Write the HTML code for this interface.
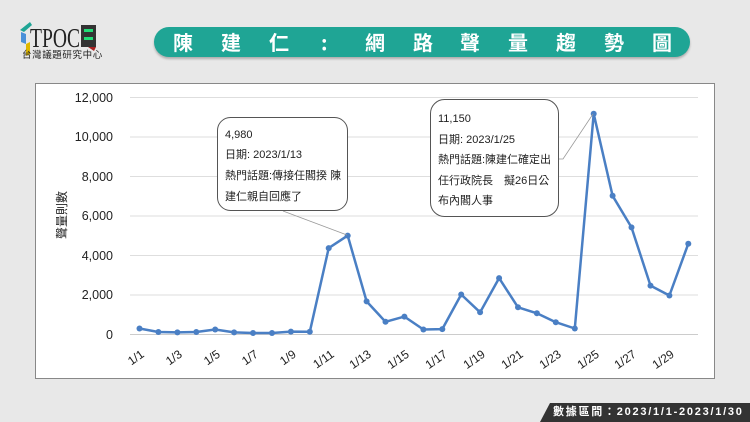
<!DOCTYPE html>
<html><head><meta charset="utf-8"><style>
html,body{margin:0;width:750px;height:422px;overflow:hidden}
body{background:#e8e8e8;position:relative;font-family:"Liberation Sans","Noto Sans CJK TC",sans-serif}
.pill{position:absolute;left:154px;top:27px;width:536px;height:30px;background:#1fa595;border-radius:15px;box-shadow:0 2px 2px rgba(0,0,0,.25);color:#fff;font-size:20px;font-weight:bold;line-height:30px;font-family:"Noto Sans CJK TC",sans-serif}
.pill span{position:absolute;top:0}
.chart{position:absolute;left:35px;top:83px;width:678px;height:294px;background:#fff;border:1px solid #888}
.foot{position:absolute;left:540px;top:403px;width:210px;height:19px;background:#333;clip-path:polygon(10px 0,100% 0,100% 100%,0 100%);color:#fff;font-size:11px;font-weight:bold;line-height:19px;letter-spacing:1.75px;white-space:nowrap;box-sizing:border-box;padding-left:13px;font-family:"Liberation Sans","Noto Sans CJK TC",sans-serif;overflow:hidden}
</style></head><body>
<svg style="position:absolute;left:18px;top:20px" width="100" height="42">
<path d="M2 10 L12 2 L14 5 L6 12 Z" fill="#1fa595"/>
<path d="M3 12 L8 14 L8 24 L3 22 Z" fill="#4a90d9"/>
<path d="M8 24 L12 22 L12 34 L8 36 Z" fill="#e0b800"/>
<text x="12" y="27" font-family="Liberation Serif,serif" font-size="27" fill="#222" textLength="50" lengthAdjust="spacingAndGlyphs">TPOC</text>
<rect x="63" y="5" width="15" height="22" fill="#333"/><rect x="66" y="9" width="9" height="3" fill="#2d7"/><rect x="66" y="17" width="9" height="3" fill="#2d7"/><path d="M70 27 L78 27 L76 31 Z" fill="#a22"/>
</svg>
<div style="position:absolute;left:22px;top:49px;font-size:9.5px;color:#222;letter-spacing:0.6px;font-family:'Noto Sans CJK TC',sans-serif;line-height:10px;white-space:nowrap">台灣議題研究中心</div>
<div class="pill"><span style="left:19px">陳</span><span style="left:67px">建</span><span style="left:115px">仁</span><span style="left:167px">:</span><span style="left:211px">網</span><span style="left:259px">路</span><span style="left:306px">聲</span><span style="left:354px">量</span><span style="left:402px">趨</span><span style="left:450px">勢</span><span style="left:498px">圖</span></div>
<div class="chart"></div>
<svg style="position:absolute;left:0;top:0" width="750" height="422" font-family="Liberation Sans,Noto Sans CJK TC,sans-serif">
<g stroke="#dedede" stroke-width="1">
<line x1="130" x2="698" y1="97.5" y2="97.5"/><line x1="130" x2="698" y1="137" y2="137"/><line x1="130" x2="698" y1="176.5" y2="176.5"/><line x1="130" x2="698" y1="216" y2="216"/><line x1="130" x2="698" y1="255.5" y2="255.5"/><line x1="130" x2="698" y1="295" y2="295"/>
</g>
<line x1="130" x2="698" y1="334.5" y2="334.5" stroke="#ccc"/>
<g font-size="12.5" fill="#222" text-anchor="end">
<text x="113" y="102">12,000</text><text x="113" y="141">10,000</text><text x="113" y="181">8,000</text><text x="113" y="220">6,000</text><text x="113" y="260">4,000</text><text x="113" y="299">2,000</text><text x="113" y="339">0</text>
</g>
<text transform="translate(66,215) rotate(-90)" font-size="12" fill="#222" text-anchor="middle" font-family="Noto Sans CJK TC,sans-serif">聲量則數</text>
<g font-size="12" fill="#222" text-anchor="end">
<text transform="translate(145,356) rotate(-35)">1/1</text>
<text transform="translate(183,356) rotate(-35)">1/3</text>
<text transform="translate(221,356) rotate(-35)">1/5</text>
<text transform="translate(259,356) rotate(-35)">1/7</text>
<text transform="translate(297,356) rotate(-35)">1/9</text>
<text transform="translate(335,356) rotate(-35)">1/11</text>
<text transform="translate(372,356) rotate(-35)">1/13</text>
<text transform="translate(410,356) rotate(-35)">1/15</text>
<text transform="translate(448,356) rotate(-35)">1/17</text>
<text transform="translate(486,356) rotate(-35)">1/19</text>
<text transform="translate(524,356) rotate(-35)">1/21</text>
<text transform="translate(562,356) rotate(-35)">1/23</text>
<text transform="translate(600,356) rotate(-35)">1/25</text>
<text transform="translate(637,356) rotate(-35)">1/27</text>
<text transform="translate(675,356) rotate(-35)">1/29</text>
</g>
<polyline fill="none" stroke="#4a7fc4" stroke-width="2.5" stroke-linejoin="round" points="139.5,328.5 158.4,332 177.4,332.4 196.3,332 215.2,329.5 234.1,332.4 253,333 272,333 290.9,331.6 309.8,331.8 328.7,248.1 347.7,235.6 366.6,301.4 385.5,321.8 404.4,316.6 423.4,329.5 442.3,329.1 461.2,294.5 480.1,312.3 499.1,278.1 518,307.3 536.9,313.3 555.8,322.2 574.8,328.5 593.7,113.8 612.6,195.8 631.5,227.4 650.5,285.6 669.4,295.5 688.3,243.7"/>
<g fill="#4a7fc4">
<circle cx="139.5" cy="328.5" r="3"/><circle cx="158.4" cy="332" r="3"/><circle cx="177.4" cy="332.4" r="3"/><circle cx="196.3" cy="332" r="3"/><circle cx="215.2" cy="329.5" r="3"/><circle cx="234.1" cy="332.4" r="3"/><circle cx="253" cy="333" r="3"/><circle cx="272" cy="333" r="3"/><circle cx="290.9" cy="331.6" r="3"/><circle cx="309.8" cy="331.8" r="3"/><circle cx="328.7" cy="248.1" r="3"/><circle cx="347.7" cy="235.6" r="3"/><circle cx="366.6" cy="301.4" r="3"/><circle cx="385.5" cy="321.8" r="3"/><circle cx="404.4" cy="316.6" r="3"/><circle cx="423.4" cy="329.5" r="3"/><circle cx="442.3" cy="329.1" r="3"/><circle cx="461.2" cy="294.5" r="3"/><circle cx="480.1" cy="312.3" r="3"/><circle cx="499.1" cy="278.1" r="3"/><circle cx="518" cy="307.3" r="3"/><circle cx="536.9" cy="313.3" r="3"/><circle cx="555.8" cy="322.2" r="3"/><circle cx="574.8" cy="328.5" r="3"/><circle cx="593.7" cy="113.8" r="3"/><circle cx="612.6" cy="195.8" r="3"/><circle cx="631.5" cy="227.4" r="3"/><circle cx="650.5" cy="285.6" r="3"/><circle cx="669.4" cy="295.5" r="3"/><circle cx="688.3" cy="243.7" r="3"/>
</g>
<line x1="283" y1="211" x2="347" y2="235" stroke="#999" stroke-width="0.8"/>
<rect x="217.5" y="117.5" width="130" height="93" rx="13" fill="#fff" stroke="#555"/>
<g font-size="11" fill="#222">
<text x="225" y="138">4,980</text><text x="225" y="158">日期: 2023/1/13</text><text x="225" y="179">熱門話題:傳接任閣揆 陳</text><text x="225" y="200">建仁親自回應了</text>
</g>
<polyline points="559,159 563,159 593,114" fill="none" stroke="#999" stroke-width="0.8"/>
<rect x="430.5" y="99.5" width="128" height="117" rx="14" fill="#fff" stroke="#555"/>
<g font-size="11" fill="#222">
<text x="438" y="122">11,150</text><text x="438" y="143">日期: 2023/1/25</text><text x="438" y="163">熱門話題:陳建仁確定出</text><text x="438" y="184">任行政院長　擬26日公</text><text x="438" y="204">布內閣人事</text>
</g>
</svg>
<div class="foot">數據區間：2023/1/1-2023/1/30</div>
</body></html>
